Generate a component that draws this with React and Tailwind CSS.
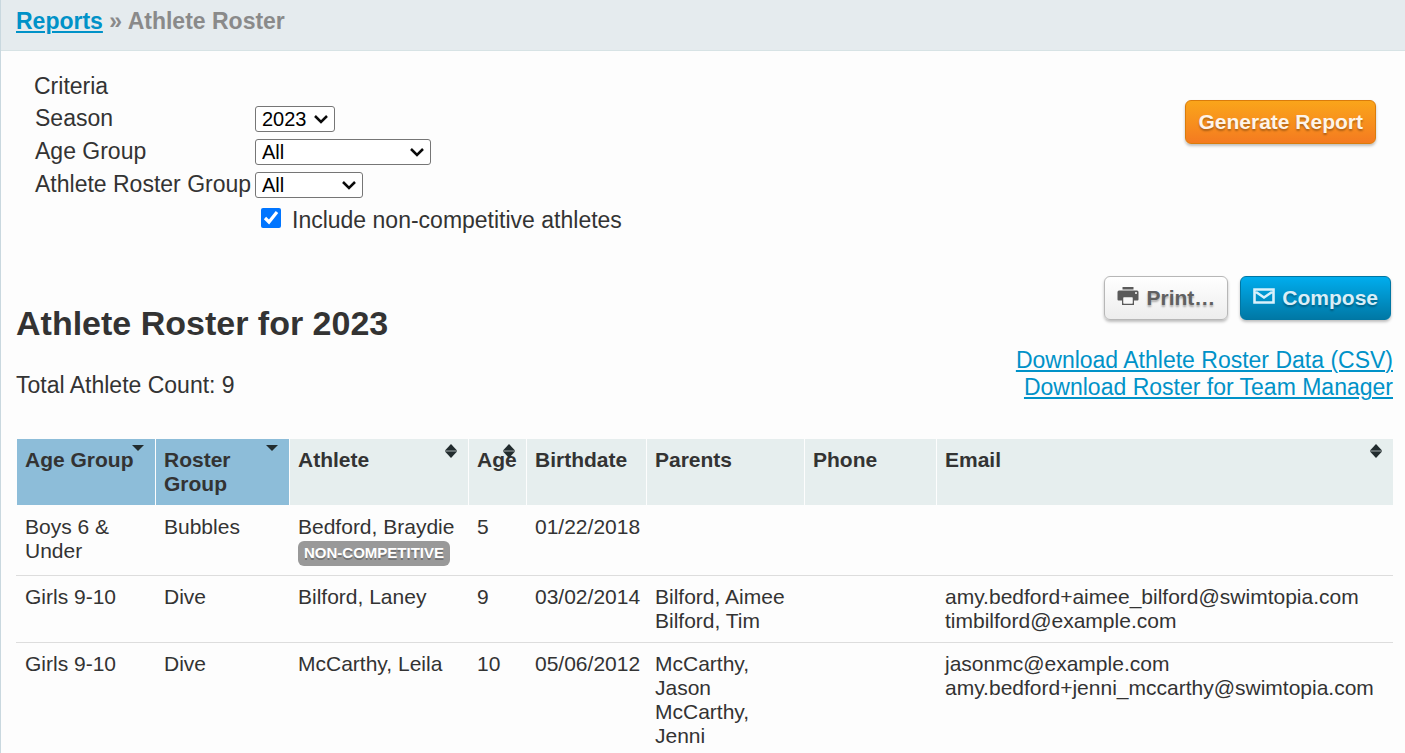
const link = "text-[#0092c8] underline decoration-2 underline-offset-2";

const buttonBase =
  "flex h-11 items-center rounded-md border px-3 text-[21px] leading-6 font-bold shadow-[0_2px_3px_rgba(0,0,0,0.25)] text-shadow-[0_2px_2px_rgba(0,0,0,0.3)]";

const columns = [
  { title: "Age Group", width: "w-[139px]", sort: "asc" },
  { title: "Roster Group", width: "w-[134px]", sort: "asc" },
  { title: "Athlete", width: "w-[179px]", sort: "both" },
  { title: "Age", width: "w-[58px]", sort: "both" },
  { title: "Birthdate", width: "w-[120px]" },
  { title: "Parents", width: "w-[158px]" },
  { title: "Phone", width: "w-[132px]" },
  { title: "Email", width: "", sort: "both" },
];

const rows = [
  {
    ageGroup: "Boys 6 & Under",
    rosterGroup: "Bubbles",
    athlete: "Bedford, Braydie",
    nonCompetitive: true,
    age: 5,
    birthdate: "01/22/2018",
    parents: [],
    emails: [],
  },
  {
    ageGroup: "Girls 9-10",
    rosterGroup: "Dive",
    athlete: "Bilford, Laney",
    age: 9,
    birthdate: "03/02/2014",
    parents: ["Bilford, Aimee", "Bilford, Tim"],
    emails: ["amy.bedford+aimee_bilford@swimtopia.com", "timbilford@example.com"],
  },
  {
    ageGroup: "Girls 9-10",
    rosterGroup: "Dive",
    athlete: "McCarthy, Leila",
    age: 10,
    birthdate: "05/06/2012",
    parents: ["McCarthy, Jason", "McCarthy, Jenni"],
    emails: ["jasonmc@example.com", "amy.bedford+jenni_mccarthy@swimtopia.com"],
  },
];

function SortIcon({ kind }) {
  return (
    <svg
      aria-hidden="true"
      viewBox="0 0 12 14"
      className="absolute top-[5px] right-[11px] h-[14px] w-3 fill-[#222c2e]"
    >
      {kind === "both" ? (
        <>
          <path d="M0 6h12v2H0z" fill="#a3abac" />
          <path d="M6 0 L12 6.400 H0 Z" />
          <path d="M0 7.600 H12 L6 14 Z" />
        </>
      ) : (
        <path d="M0 1 H12 L6 7 Z" />
      )}
    </svg>
  );
}

function PrinterIcon() {
  return (
    <svg aria-hidden="true" viewBox="0 0 22 20" className="mb-1 h-5 w-[22px]">
      <path fill="#5a5a5a" d="M5.500 1h11v2.500h-11z" />
      <path
        fill="#5a5a5a"
        fillRule="evenodd"
        d="M2 4.500h18a1.500 1.500 0 0 1 1.500 1.500v7.500a1 1 0 0 1-1 1h-3.500v4.500h-12v-4.500h-3.500a1 1 0 0 1-1-1v-7.500a1.500 1.500 0 0 1 1.500-1.500zM6.500 11.500v6h9v-6z"
      />
      <path d="M6.500 11.500h9v6h-9z" fill="#f8f8f8" />
      <circle cx="19" cy="7" r="1" fill="#fff" />
    </svg>
  );
}

function EnvelopeIcon() {
  return (
    <svg aria-hidden="true" viewBox="0 0 22 16" className="mb-1 h-4 w-[22px]">
      <path d="M1.500 1.500h19v13h-19z M3 4l8 5.500l8-5.500" fill="none" stroke="#d9f1fb" strokeWidth="2.600" />
    </svg>
  );
}

function SelectField({ id, label, width, options }) {
  return (
    <div className="flex h-8 items-center">
      <label htmlFor={id} className="w-[220px] shrink-0 pb-0.5 whitespace-nowrap">
        {label}
      </label>
      <div className={`relative ${width}`}>
        <select
          id={id}
          className="block h-[26px] w-full appearance-none rounded-[3px] border border-[#767676] bg-white pl-1.5 text-[20px] leading-6 text-black"
        >
          {options.map((option) => (
            <option key={option}>{option}</option>
          ))}
        </select>
        <svg
          aria-hidden="true"
          viewBox="0 0 14 10"
          className="pointer-events-none absolute top-2 right-[7px] h-[10px] w-[14px]"
        >
          <path d="M1 2 L7 8 L13 2" fill="none" stroke="#0a0a0a" strokeWidth="2.500" />
        </svg>
      </div>
    </div>
  );
}

function Lines({ items }) {
  return items.map((item) => <div key={item}>{item}</div>);
}

export default function App() {
  return (
    <div className="min-h-screen border-l border-[#c9d8df] bg-[#fdfdfd] font-['Liberation_Sans',Arial,sans-serif] text-[23px] leading-[27px] text-[#333]">
      <nav className="border-b border-[#d7e3e5] bg-[#e5ebee] px-[15px] pt-2 pb-[15px] font-bold text-[#8a8a8a]">
        <a href="#reports" className={link}>
          Reports
        </a>{" "}
        » Athlete Roster
      </nav>

      <main className="pr-3 pl-[15px]">
        <form
          className="flex items-start justify-between pt-[22px] pr-[17px] pl-[18px]"
          onSubmit={(event) => event.preventDefault()}
        >
          <fieldset>
            <legend className="pb-[3px]">Criteria</legend>
            <div className="flex flex-col gap-px pl-px">
              <SelectField id="season" label="Season" width="w-20" options={["2023"]} />
              <SelectField id="age-group" label="Age Group" width="w-44" options={["All"]} />
              <SelectField id="roster-group" label="Athlete Roster Group" width="w-[108px]" options={["All"]} />
              <div className="flex h-8 items-center gap-[11px] pl-[226px]">
                <input id="include" type="checkbox" defaultChecked className="size-5" />
                <label htmlFor="include" className="pt-1">
                  Include non-competitive athletes
                </label>
              </div>
            </div>
          </fieldset>
          <button
            type="submit"
            className={`${buttonBase} mt-[27px] border-[#da7c0c] bg-linear-to-b from-[#faa51a] to-[#f47a20] text-[#fef4e9]`}
          >
            Generate Report
          </button>
        </form>

        <section className="flex items-start justify-between pt-[42px]">
          <div className="pt-[27px]">
            <h1 className="text-[34px] leading-10 font-bold">Athlete Roster for 2023</h1>
            <p className="pt-[29px]">Total Athlete Count: 9</p>
          </div>
          <div className="flex flex-col items-end">
            <div className="flex gap-3 pr-0.5">
              <button
                type="button"
                className={`${buttonBase} gap-[7px] border-[#b7b7b7] bg-linear-to-b from-white to-[#ededed] text-[#606060]`}
              >
                <PrinterIcon />
                Print…
              </button>
              <button
                type="button"
                className={`${buttonBase} gap-[7px] border-[#0076a3] bg-linear-to-b from-[#00adee] to-[#0078a5] text-[#d9eef7]`}
              >
                <EnvelopeIcon />
                Compose
              </button>
            </div>
            <a href="#csv" className={`${link} mt-[27px]`}>
              Download Athlete Roster Data (CSV)
            </a>
            <a href="#team-manager" className={link}>
              Download Roster for Team Manager
            </a>
          </div>
        </section>

        <table className="mt-[38px] w-full table-fixed border-collapse text-left text-[21px] leading-6">
          <thead>
            <tr>
              {columns.map(({ title, width, sort }) => (
                <th
                  key={title}
                  scope="col"
                  className={`relative py-[9px] pr-1 pl-[9px] align-top font-bold shadow-[inset_1px_0_0_#fdfdfd] ${width} ${
                    sort === "asc" ? "bg-[#8dbdd9]" : "bg-[#e6eeee]"
                  }`}
                >
                  {sort ? (
                    <button type="button" className="text-left">
                      {title}
                      <SortIcon kind={sort} />
                    </button>
                  ) : (
                    title
                  )}
                </th>
              ))}
            </tr>
          </thead>
          <tbody>
            {rows.map((row) => (
              <tr
                key={row.athlete}
                className="border-t border-[#ddd] align-top first:border-transparent [&>td]:py-[9px] [&>td]:pr-1 [&>td]:pl-[9px]"
              >
                <td>{row.ageGroup}</td>
                <td>{row.rosterGroup}</td>
                <td className="whitespace-nowrap">
                  {row.athlete}
                  {row.nonCompetitive && (
                    <span className="mt-0.5 block h-[25px] w-fit rounded-md bg-[#999] px-1.5 text-[15px] font-bold text-white text-shadow-[0_2px_0_rgba(0,0,0,0.25)]">
                      NON-COMPETITIVE
                    </span>
                  )}
                </td>
                <td>{row.age}</td>
                <td>{row.birthdate}</td>
                <td>
                  <Lines items={row.parents} />
                </td>
                <td />
                <td>
                  <Lines items={row.emails} />
                </td>
              </tr>
            ))}
          </tbody>
        </table>
      </main>
    </div>
  );
}
